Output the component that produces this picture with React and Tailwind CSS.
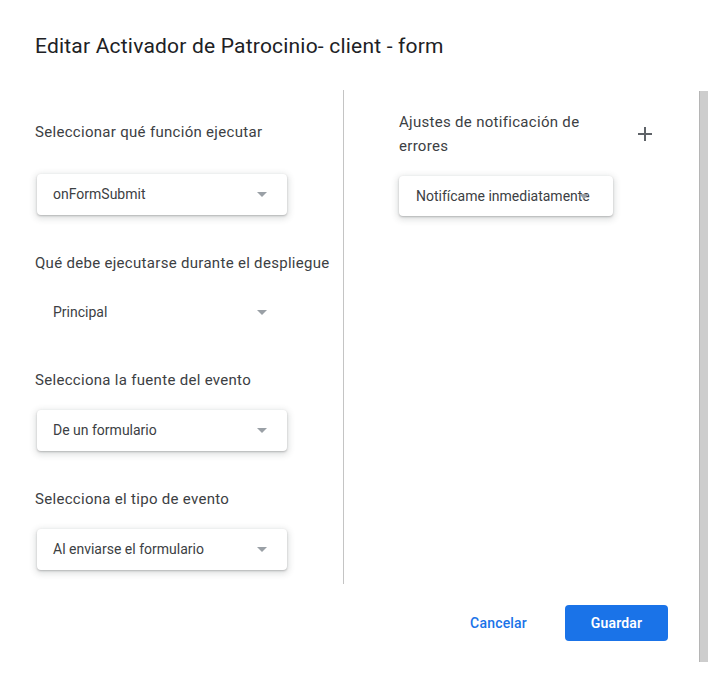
import React from "react";

function Arrow() {
  return (
    <svg width="10" height="5" viewBox="0 0 10 5" className="shrink-0">
      <path d="M0 0 L10 0 L5 5 Z" fill="#9aa0a6" />
    </svg>
  );
}

function Select({ value, flat }) {
  return (
    <div
      className={
        "flex items-center justify-between w-[250px] h-[41px] pl-4 pr-5 rounded-[4px] bg-white text-[14px] text-[#3c4043] " +
        (flat ? "" : "shadow-[0_1px_2px_0_rgba(60,64,67,0.3),0_2px_6px_2px_rgba(60,64,67,0.15)]")
      }
    >
      <span>{value}</span>
      <Arrow />
    </div>
  );
}

function Label({ children, className }) {
  return (
    <div className={"text-[15px] leading-5 tracking-[0.3px] text-[#3c4043] " + (className || "")}>
      {children}
    </div>
  );
}

export default function App() {
  return (
    <div className="w-[712px] h-[677px] bg-white flex flex-col font-['Roboto',sans-serif]">
      <h1 className="pl-[35px] pt-[32px] text-[21px] leading-7 tracking-[0.2px] text-[#202124]">
        Editar Activador de Patrocinio- client - form
      </h1>

      <div className="flex mt-[30px]">
        <div className="flex-1 flex flex-col">
          <div className="flex h-[494px]">
            {/* left column */}
            <div className="w-[344px] pl-[37px] pt-[32px] border-r border-[#c4c4c4] flex flex-col">
              <Label className="-ml-[2px]">Seleccionar qué función ejecutar</Label>
              <div className="mt-[32px]">
                <Select value="onFormSubmit" />
              </div>
              <Label className="-ml-[2px] mt-[38px]">Qué debe ejecutarse durante el despliegue</Label>
              <div className="mt-[19px]">
                <Select value="Principal" flat />
              </div>
              <Label className="-ml-[2px] mt-[37px]">Selecciona la fuente del evento</Label>
              <div className="mt-[20px]">
                <Select value="De un formulario" />
              </div>
              <Label className="-ml-[2px] mt-[38px]">Selecciona el tipo de evento</Label>
              <div className="mt-[20px]">
                <Select value="Al enviarse el formulario" />
              </div>
            </div>

            {/* right column */}
            <div className="flex-1 pl-[55px] pt-[20px] flex flex-col">
              <div className="flex items-start">
                <div className="w-[200px] text-[15px] leading-6 tracking-[0.3px] text-[#3c4043]">
                  Ajustes de notificación de errores
                </div>
                <svg width="14" height="14" viewBox="0 0 14 14" className="ml-[39px] mt-[17px]">
                  <path d="M7 0 V14 M0 7 H14" stroke="#5f6368" strokeWidth="2" />
                </svg>
              </div>
              <div className="relative mt-[18px] w-[214px] h-[40px] pl-[17px] flex items-center rounded-[4px] bg-white text-[14px] text-[#3c4043] shadow-[0_1px_2px_0_rgba(60,64,67,0.3),0_2px_6px_2px_rgba(60,64,67,0.15)]">
                <span>Notifícame inmediatamente</span>
                <div className="absolute right-[24px] top-[18px] flex">
                  <Arrow />
                </div>
              </div>
            </div>
          </div>

          {/* footer */}
          <div className="flex justify-end items-center mt-[21px] pr-[31px]">
            <button className="h-9 px-6 text-[14px] font-medium text-[#1a73e8] rounded-[4px] tracking-[0.2px]">
              Cancelar
            </button>
            <button className="ml-[14px] w-[103px] h-9 rounded-[4px] bg-[#1a73e8] text-white text-[14px] font-semibold tracking-[0.2px]">
              Guardar
            </button>
          </div>
        </div>

        {/* scrollbar */}
        <div className="w-[9px] h-[571px] mt-[1px] mr-[4px] bg-[#cdcdcd] border-l border-[#b5b5b5]" />
      </div>
    </div>
  );
}
